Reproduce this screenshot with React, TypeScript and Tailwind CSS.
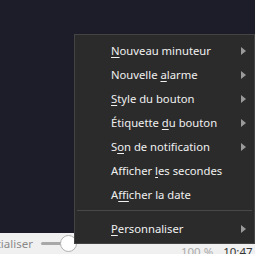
import React from "react";

const Arrow = () => (
  <svg width="5" height="8" viewBox="0 0 5 8" className="absolute right-[8px] top-[8px]">
    <path d="M0 0 L5 4 L0 8 Z" fill="#9a9a9a" />
  </svg>
);

type Item = { pre: string; u: string; post: string; sub: boolean };

const items: Item[] = [
  { pre: "", u: "N", post: "ouveau minuteur", sub: true },
  { pre: "Nouvelle ", u: "a", post: "larme", sub: true },
  { pre: "", u: "S", post: "tyle du bouton", sub: true },
  { pre: "Étiquette ", u: "d", post: "u bouton", sub: true },
  { pre: "S", u: "o", post: "n de notification", sub: true },
  { pre: "Afficher ", u: "l", post: "es secondes", sub: false },
  { pre: "A", u: "f", post: "ficher la date", sub: false },
];

const Row = ({ it }: { it: Item }) => (
  <div className="relative h-[24px] flex items-center pl-[36px] text-[#f0f0f0]">
    <span className="whitespace-pre">
      {it.pre}
      <span className="underline underline-offset-2">{it.u}</span>
      {it.post}
    </span>
    {it.sub && <Arrow />}
  </div>
);

export default function App() {
  return (
    <div
      className="relative w-[255px] h-[254px] overflow-hidden bg-[#1c1d28] flex flex-col"
      style={{ fontFamily: '"Noto Sans", "Open Sans", sans-serif' }}
    >
      <div className="flex-1" />
      <div className="h-[21px] bg-[#f0f0f0] flex items-center text-[11.5px] text-[#8a8a8a]">
        <span className="ml-[-30px] whitespace-nowrap">Réinitialiser</span>
        <div className="relative ml-[8px] w-[60px] h-[21px] flex items-center shrink-0">
          <div className="w-[36px] h-[3px] bg-[#a8a8a8] rounded" />
          <div className="absolute left-[19px] top-[2px] w-[17px] h-[17px] rounded-full bg-white border border-[#b0b0b0]" />
        </div>
        <span className="ml-[80px] mt-[17px] text-[#aaa] whitespace-nowrap shrink-0">100 %</span>
        <span className="ml-[10px] mt-[17px] text-[#333] whitespace-nowrap shrink-0">10:47</span>
      </div>

      <div className="absolute left-[74px] top-[34px] w-[181px] h-[210px] bg-[#2b2b2b] border border-[#444] text-[11.25px] pt-[4px]">
        {items.map((it, i) => (
          <Row key={i} it={it} />
        ))}
        <div className="mt-[3px] mb-[6px] mx-[2px] h-[1px] bg-[#484848]" />
        <div className="relative h-[24px] flex items-center pl-[36px] text-[#f0f0f0]">
          <span>
            <span className="underline underline-offset-2">P</span>ersonnaliser
          </span>
          <Arrow />
        </div>
      </div>
    </div>
  );
}
